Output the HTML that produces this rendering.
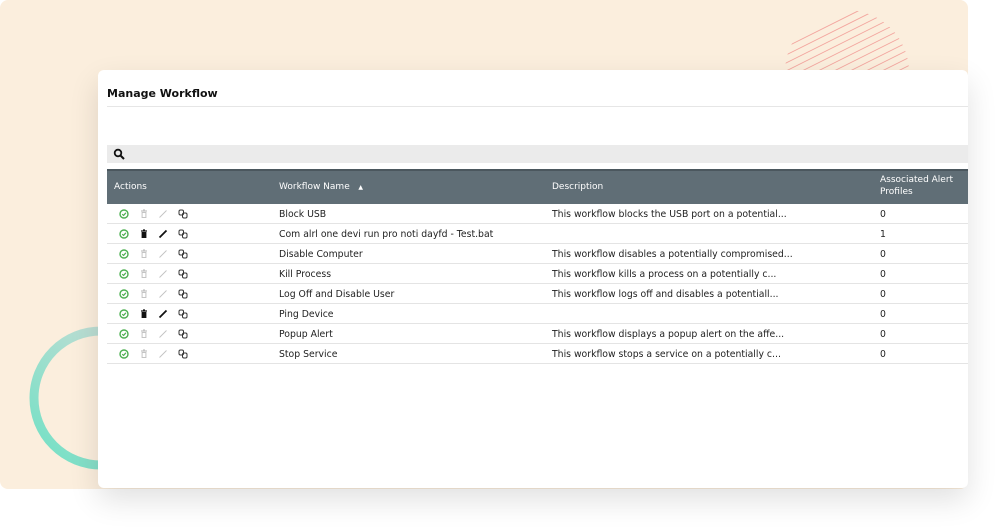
<!DOCTYPE html>
<html><head><style>
*{margin:0;padding:0;box-sizing:border-box}
body{width:1000px;height:530px;background:#fff;position:relative;overflow:hidden;font-family:"DejaVu Sans","Liberation Sans",sans-serif}
.bg{position:absolute;left:0;top:0;width:968px;height:489px;background:#fbeedd;border-radius:8px}
.card{position:absolute;left:98px;top:70px;width:870px;height:418px;background:#fff;border-radius:6px;box-shadow:0 12px 30px rgba(0,0,0,.12);overflow:hidden}
.title{position:absolute;left:9px;top:17px;font-size:11px;font-weight:bold;color:#111}
.hl{position:absolute;left:9px;right:0;top:36px;height:1px;background:#e6e6e6}
.search{position:absolute;left:9px;right:0;top:75px;height:18px;background:#ebebeb}
.th{position:absolute;left:9px;right:0;top:99px;height:35px;background:#606e76;border-top:2px solid #4b575e;color:#fff;font-size:9px}
.th span{position:absolute}
.row{position:absolute;left:9px;right:0;height:20px;border-bottom:1.5px solid #e4e4e4;font-size:9.3px;color:#222}
.row span{position:absolute;top:5px;white-space:nowrap}
.ic{position:absolute;top:5px}
</style></head><body>
<div class="bg"></div>
<svg style="position:absolute;left:0;top:0" width="1000" height="530">
<defs><clipPath id="c"><circle cx="847" cy="72" r="62"/></clipPath>
<linearGradient id="g" x1="0" y1="1" x2="1" y2="0"><stop offset="0" stop-color="#6fe0c4"/><stop offset="1" stop-color="#d8ddd9"/></linearGradient></defs>
<g clip-path="url(#c)" stroke="#f3a7a0" stroke-width="1">
<path d="M760 60 L900 -10 M760 68 L910 -7 M760 76 L920 -4 M760 84 L930 -1 M760 92 L940 2 M760 100 L950 5 M760 108 L960 8 M760 116 L960 16 M760 124 L960 24 M760 132 L960 32 M760 140 L960 40 M760 148 L960 48"/>
</g>
<circle cx="101" cy="398" r="67" fill="none" stroke="url(#g)" stroke-width="9"/>
</svg>
<div class="card">
<div class="title">Manage Workflow</div>
<div class="hl"></div>
<div class="search"><svg width="14" height="14" style="position:absolute;left:6px;top:3px"><circle cx="5" cy="5" r="3.3" fill="none" stroke="#111" stroke-width="1.8"/><path d="M7.5 7.5 L11 11" stroke="#111" stroke-width="2"/></svg></div>
<div class="th"><span style="left:7px;top:11px">Actions</span><span style="left:172px;top:11px">Workflow Name &nbsp;&nbsp;<span style="font-size:6px;position:static">▲</span></span><span style="left:445px;top:11px">Description</span><span style="left:773px;top:3px;line-height:12px">Associated Alert<br>Profiles</span></div>
<div id="rows"></div>
</div>
<script>
var d=[["Block USB","This workflow blocks the USB port on a potential...","0",0],["Com alrl one devi run pro noti dayfd - Test.bat","","1",1],["Disable Computer","This workflow disables a potentially compromised...","0",0],["Kill Process","This workflow kills a process on a potentially c...","0",0],["Log Off and Disable User","This workflow logs off and disables a potentiall...","0",0],["Ping Device","","0",1],["Popup Alert","This workflow displays a popup alert on the affe...","0",0],["Stop Service","This workflow stops a service on a potentially c...","0",0]];
var h="";d.forEach(function(r,i){var c=r[3]?"#111":"#c4c4c4";
h+='<div class="row" style="top:'+(134+i*20)+'px">'+
'<svg class="ic" style="left:12px" width="10" height="10"><circle cx="5" cy="5" r="4" fill="none" stroke="#4caf50" stroke-width="1.4"/><path d="M3.2 5.2 L4.6 6.4 L6.9 3.8" fill="none" stroke="#4caf50" stroke-width="1.2"/></svg>'+
'<svg class="ic" style="left:32px" width="10" height="10"><path d="M2 2 H8 M4 1 H6" stroke="'+c+'" stroke-width="1.2"/><rect x="2.6" y="3" width="4.8" height="6" fill="'+c+'"/>'+(r[3]?'':'<rect x="3.6" y="4" width="2.8" height="4" fill="#fff"/>')+'</svg>'+
'<svg class="ic" style="left:51px" width="10" height="10"><path d="M1.5 8.5 L8.5 1.5" stroke="'+c+'" stroke-width="'+(r[3]?1.8:1)+'"/></svg>'+
'<svg class="ic" style="left:71px" width="10" height="10"><rect x="1" y="1" width="4.5" height="5" rx="1.5" fill="none" stroke="#333" stroke-width="1"/><rect x="4.5" y="4" width="4.5" height="5" rx="1.5" fill="none" stroke="#333" stroke-width="1"/></svg>'+
'<span style="left:172px">'+r[0]+'</span><span style="left:445px">'+r[1]+'</span><span style="left:773px">'+r[2]+'</span></div>';});
document.getElementById("rows").innerHTML=h;
</script>
</body></html>
